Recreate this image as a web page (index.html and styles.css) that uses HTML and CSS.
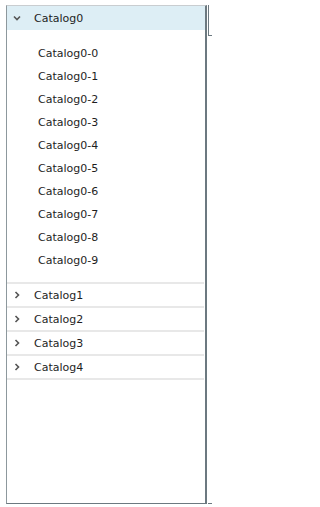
FILE: index.html
```html
<!DOCTYPE html>
<html>
<head>
<meta charset="utf-8">
<link rel="stylesheet" href="styles.css">
</head>
<body>
<div class="page">
  <div class="panel">
    <div class="group">
      <div class="head open">
        <svg class="chev" width="8" height="6" viewBox="0 0 8 6"><path d="M1 1.5 L4 4.5 L7 1.5" fill="none" stroke="#555" stroke-width="1.6"/></svg>
        <span>Catalog0</span>
      </div>
      <ul class="items">
        <li>Catalog0-0</li>
        <li>Catalog0-1</li>
        <li>Catalog0-2</li>
        <li>Catalog0-3</li>
        <li>Catalog0-4</li>
        <li>Catalog0-5</li>
        <li>Catalog0-6</li>
        <li>Catalog0-7</li>
        <li>Catalog0-8</li>
        <li>Catalog0-9</li>
      </ul>
    </div>
    <div class="group">
      <div class="head">
        <svg class="chev" width="8" height="8" viewBox="0 0 8 8"><path d="M2.5 1 L5.5 4 L2.5 7" fill="none" stroke="#555" stroke-width="1.6"/></svg>
        <span>Catalog1</span>
      </div>
    </div>
    <div class="group">
      <div class="head">
        <svg class="chev" width="8" height="8" viewBox="0 0 8 8"><path d="M2.5 1 L5.5 4 L2.5 7" fill="none" stroke="#555" stroke-width="1.6"/></svg>
        <span>Catalog2</span>
      </div>
    </div>
    <div class="group">
      <div class="head">
        <svg class="chev" width="8" height="8" viewBox="0 0 8 8"><path d="M2.5 1 L5.5 4 L2.5 7" fill="none" stroke="#555" stroke-width="1.6"/></svg>
        <span>Catalog3</span>
      </div>
    </div>
    <div class="group">
      <div class="head">
        <svg class="chev" width="8" height="8" viewBox="0 0 8 8"><path d="M2.5 1 L5.5 4 L2.5 7" fill="none" stroke="#555" stroke-width="1.6"/></svg>
        <span>Catalog4</span>
      </div>
    </div>
  </div>
  <div class="side">
    <div class="side-top"></div>
    <div class="side-rest"></div>
  </div>
</div>
</body>
</html>
```

FILE: styles.css
```css
html, body {
  margin: 0;
  padding: 0;
  background: #ffffff;
}
.page {
  display: flex;
  padding: 5px 0 0 6px;
  height: 507px;
  box-sizing: border-box;
  font-family: "DejaVu Sans", Verdana, sans-serif;
  font-size: 11px;
  color: #1e1e1e;
}
.panel {
  width: 201px;
  height: 499px;
  box-sizing: border-box;
  border-top: 1px solid #c9cdd0;
  border-left: 1px solid #8d989d;
  border-right: 2px solid #6c7980;
  border-bottom: 1px solid #6c7980;
  background: #fff;
  display: flex;
  flex-direction: column;
}
.group {
  border-bottom: 2px solid #e8e8e8;
  margin: 0 1px 0 0;
}
.head {
  height: 22px;
  display: flex;
  align-items: center;
  padding-left: 6px;
}
.head.open {
  height: 24px;
  background: #ddeef5;
  margin-right: -1px;
}
.chev {
  display: block;
  width: 8px;
  margin-right: 13px;
}
.head span {
  line-height: 14px;
  padding-top: 2px;
}
.items {
  list-style: none;
  margin: 0;
  padding: 12px 0 10px 31px;
}
.items li {
  height: 23px;
  line-height: 23px;
}
.side {
  margin-left: 1px;
  width: 4px;
  flex: none;
  display: flex;
  flex-direction: column;
  height: 499px;
}
.side-top {
  height: 30px;
  border-left: 1px solid #6c7980;
  border-bottom: 1px solid #6c7980;
}
.side-rest {
  flex: 1;
  border-bottom: 1px solid #6c7980;
}
```
